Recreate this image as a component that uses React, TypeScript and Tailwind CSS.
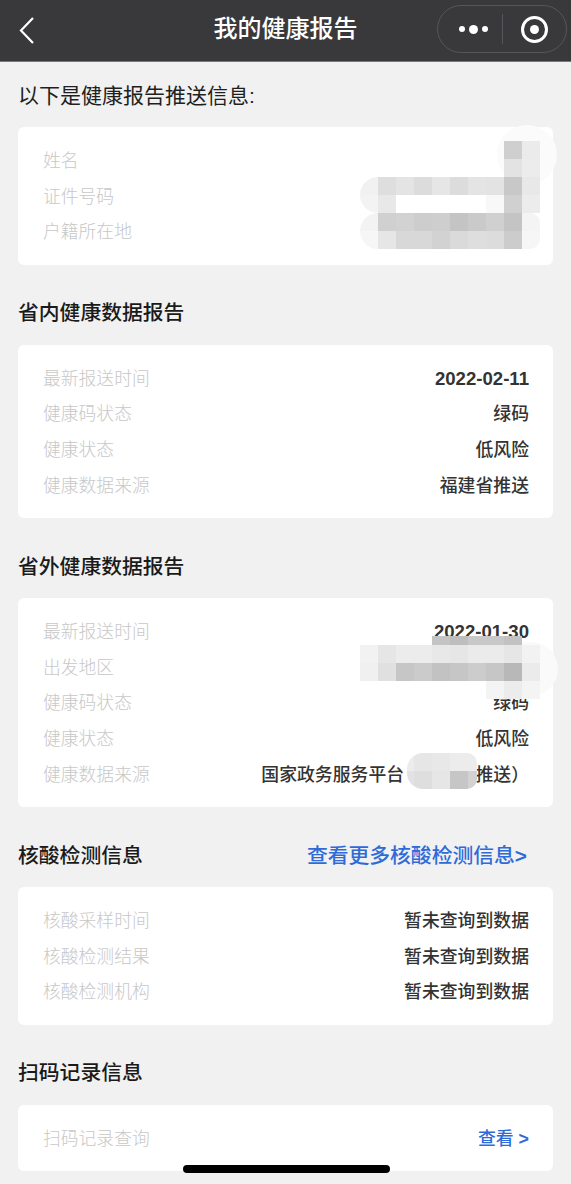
import React from 'react';

const cjk = "font-['Liberation_Sans','Noto_Sans_CJK_SC',sans-serif]";

type Row = { label: string; value?: React.ReactNode; bold?: boolean };

function InfoCard({ rows, children }: { rows: Row[]; children?: React.ReactNode }) {
  return (
    <div className="relative mx-[18px] rounded-[6px] bg-white pb-[14.5px] pl-[25px] pr-[24px] pt-[16.5px]">
      {rows.map((row) => (
        <div key={row.label} className="flex h-[35.7px] items-center justify-between">
          <span className="text-[17.8px] font-light text-[#c8c8c8]">{row.label}</span>
          <span className={`text-[#333333] ${row.bold ? 'text-[18.6px] font-bold' : 'text-[17.85px] font-medium'}`}>{row.value}</span>
        </div>
      ))}
      {children}
    </div>
  );
}

function SectionTitle({ title, link }: { title: string; link?: string }) {
  return (
    <div className="flex h-[79.6px] items-center justify-between pl-[18px] pr-[44px] pt-[16px] text-[20.8px]">
      <h2 className="font-medium text-[#1a1a1a]">{title}</h2>
      {link && (
        <span className="font-medium text-[#2f6bd8]">
          {link}
          <span className="font-bold">&gt;</span>
        </span>
      )}
    </div>
  );
}

// blurred out patches, each row is a strip of 18px cells
function Mosaic({ className, rows }: { className: string; rows: string[][] }) {
  return (
    <div className={`absolute flex flex-col ${className}`}>
      {rows.map((cells, i) => (
        <div key={i} className="flex h-[18px]">
          {cells.map((cell, j) => (
            <div key={j} className={`h-full w-[18px] ${cell}`} />
          ))}
        </div>
      ))}
    </div>
  );
}

const t = 'bg-transparent';

export default function App() {
  return (
    <div className={`relative h-[1184px] w-[571px] overflow-hidden bg-[#f1f1f1] ${cjk}`}>
      {/* Nav bar */}
      <div className="relative flex h-[62px] items-center justify-center border-b border-b-[#77787a] bg-[#39393b] pb-[3px]">
        <svg className="absolute left-[18px] top-[16px]" width="18" height="28" viewBox="0 0 18 28" fill="none">
          <path d="M15 2 L3 14.5 L15 27" stroke="#ffffff" strokeWidth="2.2" />
        </svg>
        <h1 className="text-[24px] font-medium text-white">我的健康报告</h1>
        <div className="absolute left-[437px] top-[5px] flex h-[48px] w-[130px] items-center rounded-full border border-[#55565a]">
          <div className="flex w-[64px] items-center justify-center gap-[4px] pl-[6px]">
            <span className="h-[6px] w-[6px] rounded-full bg-white" />
            <span className="h-[9px] w-[9px] rounded-full bg-white" />
            <span className="h-[6px] w-[6px] rounded-full bg-white" />
          </div>
          <div className="h-[30px] w-px bg-[#55565a]" />
          <div className="ml-[18px] flex h-[27px] w-[27px] items-center justify-center rounded-full border-[3px] border-white">
            <span className="h-[9px] w-[9px] rounded-full bg-white" />
          </div>
        </div>
      </div>

      <div className="flex h-[65px] items-center pl-[18px] pt-[2px] text-[21px] text-[#1f1f1f]">以下是健康报告推送信息:</div>

      <InfoCard rows={[{ label: '姓名' }, { label: '证件号码' }, { label: '户籍所在地' }]}>
        <div className="absolute left-[479px] top-[-2px] h-[60px] w-[60px] rounded-full bg-[#fbfbfb]" />
        <Mosaic
          className="left-[342px] top-[14px]"
          rows={[
            [t, t, t, t, t, t, t, t, 'bg-[#cfcfcf]', 'bg-[#ebebeb]'],
            [t, t, t, t, t, t, t, t, 'bg-[#e3e3e3]', 'bg-[#ececec]'],
            ['bg-[#f1f1f1] rounded-tl-[18px]', 'bg-[#dedede]', 'bg-[#e4e4e4]', 'bg-[#dcdcdc]', 'bg-[#e6e6e6]', 'bg-[#dcdcdc]', 'bg-[#e4e4e4]', 'bg-[#e3e3e3]', 'bg-[#c8c8c8]', 'bg-[#e8e8e8]'],
            ['bg-[#f3f3f3] rounded-bl-[18px]', 'bg-[#e8e8e8]', 'bg-white', 'bg-white', 'bg-white', 'bg-white', 'bg-white', 'bg-[#f8f8f8]', 'bg-[#d0d0d0]', 'bg-[#ececec]'],
            ['bg-[#f3f3f3] rounded-tl-[18px]', 'bg-[#d0d0d0]', 'bg-[#d2d2d2]', 'bg-[#cdcdcd]', 'bg-[#cecece]', 'bg-[#c4c4c4]', 'bg-[#cacaca]', 'bg-[#d0d0d0]', 'bg-[#c4c4c4]', 'bg-[#f4f4f4] rounded-tr-[10px]'],
            ['bg-[#f6f6f6] rounded-bl-[18px]', 'bg-[#e6e6e6]', 'bg-[#d8d8d8]', 'bg-[#d8d8d8]', 'bg-[#d2d2d2]', 'bg-[#dadada]', 'bg-[#dedede]', 'bg-[#dcdcdc]', 'bg-[#cccccc]', 'bg-[#f6f6f6] rounded-br-[10px]'],
          ]}
        />
      </InfoCard>

      <SectionTitle title="省内健康数据报告" />
      <InfoCard
        rows={[
          { label: '最新报送时间', value: '2022-02-11', bold: true },
          { label: '健康码状态', value: '绿码' },
          { label: '健康状态', value: '低风险' },
          { label: '健康数据来源', value: '福建省推送' },
        ]}
      />

      <SectionTitle title="省外健康数据报告" />
      <InfoCard
        rows={[
          { label: '最新报送时间', value: '2022-01-30', bold: true },
          { label: '出发地区' },
          { label: '健康码状态', value: '绿码' },
          { label: '健康状态', value: '低风险' },
          { label: '健康数据来源', value: '国家政务服务平台（福建省推送）' },
        ]}
      >
        <div className="absolute left-[504px] top-[44px] h-[54px] w-[36px] rounded-r-full bg-[#fafafa]" />
        <Mosaic
          className="left-[414px] top-[38px] [&>div]:h-[9px]"
          rows={[['bg-[#c4c4c4]', 'bg-[#bebebe]', 'bg-[#c8c8c8]', 'bg-[#c8c8c8]', 'bg-[#c2c2c2]']]}
        />
        <Mosaic
          className="left-[342px] top-[47px]"
          rows={[
            ['bg-[#f2f2f2]', 'bg-[#e6e6e6]', 'bg-[#ececec]', 'bg-[#ececec]', 'bg-[#e8e8e8]', 'bg-[#e6e6e6]', 'bg-[#ebebeb]', 'bg-[#ebebeb]', 'bg-[#e6e6e6]', 'bg-[#f2f2f2]'],
            ['bg-[#f0f0f0]', 'bg-[#e0e0e0]', 'bg-[#c6c6c6]', 'bg-[#cbcbcb]', 'bg-[#c2c2c2]', 'bg-[#c6c6c6]', 'bg-[#cccccc]', 'bg-[#c6c6c6]', 'bg-[#b8b8b8]', 'bg-[#ebebeb]'],
            [t, t, t, t, t, t, t, 'bg-[#f4f4f4]', 'bg-[#ececec]', 'bg-[#f4f4f4]'],
          ]}
        />
        <div className="absolute left-[389px] top-[155px] grid h-[36px] w-[70px] grid-cols-[7px_18px_18px_18px_9px] grid-rows-2 overflow-hidden rounded-l-[16px] rounded-r-[10px]">
          <div className="bg-[#ececec]" />
          <div className="bg-[#e6e6e6]" />
          <div className="bg-[#e8e8e8]" />
          <div className="bg-[#ececec]" />
          <div className="bg-[#ececec]" />
          <div className="bg-[#e2e2e2]" />
          <div className="bg-[#dedede]" />
          <div className="bg-[#e6e6e6]" />
          <div className="bg-[#c6c6c6]" />
          <div className="bg-[#d2d2d2]" />
        </div>
      </InfoCard>

      <SectionTitle title="核酸检测信息" link="查看更多核酸检测信息" />
      <InfoCard
        rows={[
          { label: '核酸采样时间', value: '暂未查询到数据' },
          { label: '核酸检测结果', value: '暂未查询到数据' },
          { label: '核酸检测机构', value: '暂未查询到数据' },
        ]}
      />

      <SectionTitle title="扫码记录信息" />
      <InfoCard
        rows={[
          {
            label: '扫码记录查询',
            value: (
              <span className="text-[#2f6bd8]">
                查看 <span className="font-bold">&gt;</span>
              </span>
            ),
          },
        ]}
      />

      {/* Home indicator */}
      <div className="absolute left-[183px] top-[1165px] h-[8px] w-[207px] rounded-full bg-black" />
    </div>
  );
}
